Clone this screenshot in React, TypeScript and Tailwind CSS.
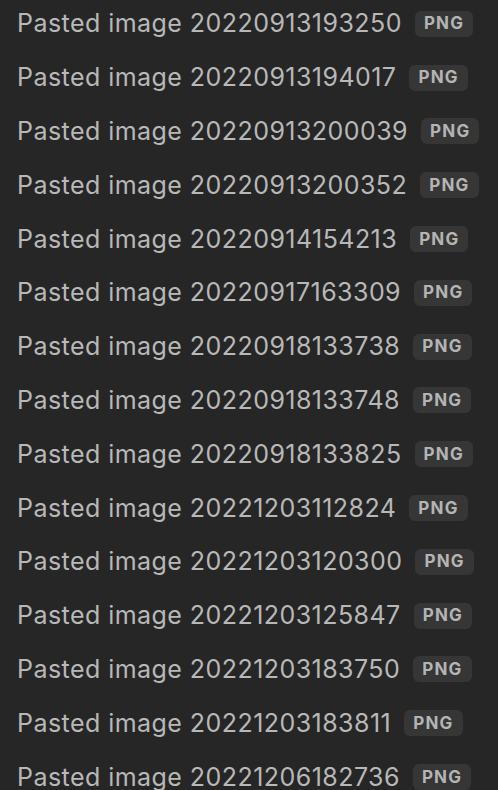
const items = [
  "20220913193250",
  "20220913194017",
  "20220913200039",
  "20220913200352",
  "20220914154213",
  "20220917163309",
  "20220918133738",
  "20220918133748",
  "20220918133825",
  "20221203112824",
  "20221203120300",
  "20221203125847",
  "20221203183750",
  "20221203183811",
  "20221206182736",
];

export default function App() {
  return (
    <div
      className="w-[498px] h-[790px] overflow-hidden bg-[#262626] pl-[17px]"
      style={{ fontFamily: "Inter, 'Noto Sans', sans-serif" }}
    >
      <div className="flex flex-col -mt-[3px]">
        {items.map((d) => (
          <div key={d} className="flex items-center h-[53.8px] shrink-0">
            <span className="text-[25px] leading-none tracking-[0.45px] text-[#b8b8b8] whitespace-nowrap">
              Pasted image {d}
            </span>
            <span className="ml-[13px] h-[26px] px-[9px] rounded-[6px] bg-[#363636] flex items-center text-[17px] font-bold tracking-[1.2px] text-[#b4b4b4] leading-none">
              PNG
            </span>
          </div>
        ))}
      </div>
    </div>
  );
}
